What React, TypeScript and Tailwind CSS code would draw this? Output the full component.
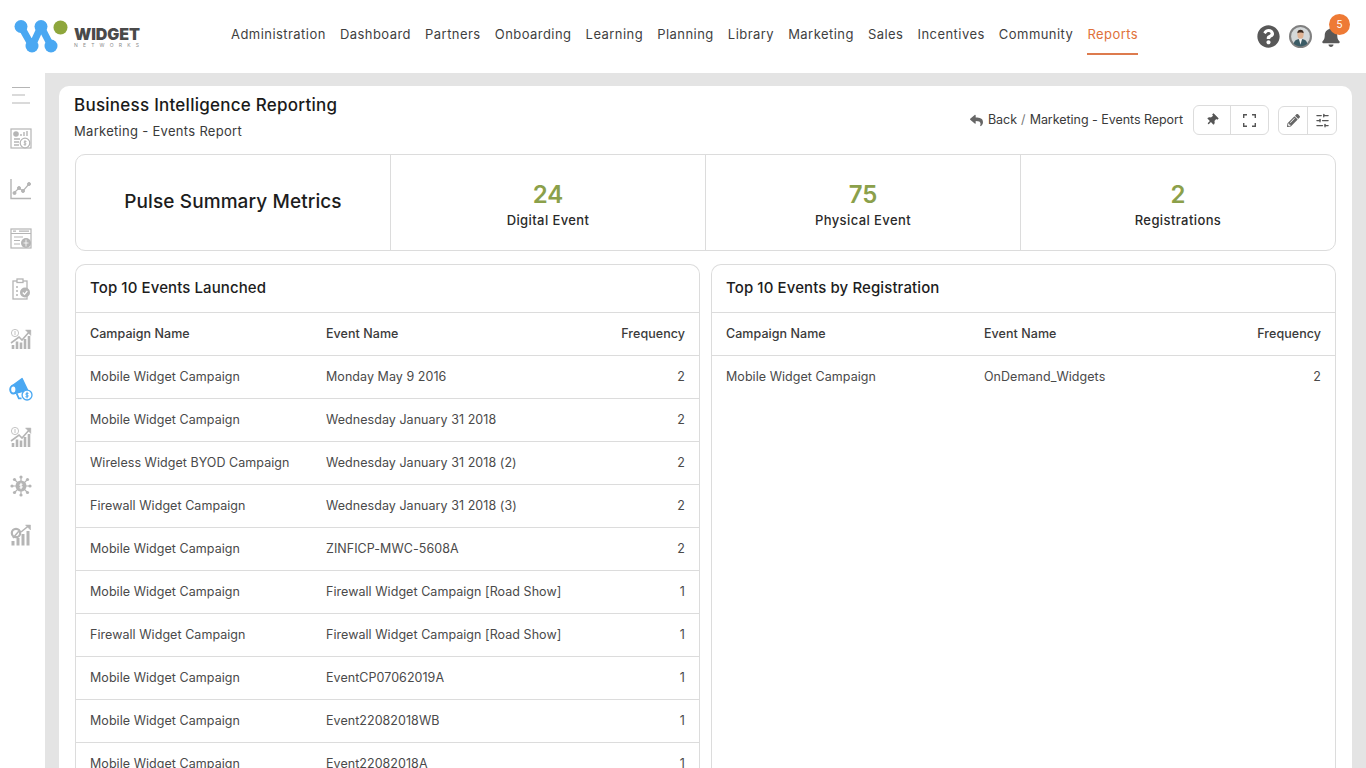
import { FaBell, FaQuestionCircle, FaReply, FaThumbtack, FaPencilAlt } from "react-icons/fa";
import { LuSlidersHorizontal } from "react-icons/lu";

const NAV = ["Administration", "Dashboard", "Partners", "Onboarding", "Learning", "Planning", "Library", "Marketing", "Sales", "Incentives", "Community"];

const METRICS = [
  { value: "24", label: "Digital Event" },
  { value: "75", label: "Physical Event" },
  { value: "2", label: "Registrations" },
];

const LAUNCHED = [
  ["Mobile Widget Campaign", "Monday May 9 2016", "2"],
  ["Mobile Widget Campaign", "Wednesday January 31 2018", "2"],
  ["Wireless Widget BYOD Campaign", "Wednesday January 31 2018 (2)", "2"],
  ["Firewall Widget Campaign", "Wednesday January 31 2018 (3)", "2"],
  ["Mobile Widget Campaign", "ZINFICP-MWC-5608A", "2"],
  ["Mobile Widget Campaign", "Firewall Widget Campaign [Road Show]", "1"],
  ["Firewall Widget Campaign", "Firewall Widget Campaign [Road Show]", "1"],
  ["Mobile Widget Campaign", "EventCP07062019A", "1"],
  ["Mobile Widget Campaign", "Event22082018WB", "1"],
  ["Mobile Widget Campaign", "Event22082018A", "1"],
];

const REGISTRATION = [["Mobile Widget Campaign", "OnDemand_Widgets", "2"]];

function Logo() {
  return (
    <div className="flex items-center">
      <svg width="56" height="36" viewBox="0 0 56 36" className="shrink-0">
        <path d="M7 7.5 L18 27 L27 7.5 L37 27" fill="none" stroke="#4aa8f2" strokeWidth="7" strokeLinecap="round" strokeLinejoin="round" />
        <circle cx="7" cy="7.5" r="6.5" fill="#4aa8f2" />
        <circle cx="18" cy="27" r="6.5" fill="#4aa8f2" />
        <circle cx="27" cy="7.5" r="6.5" fill="#4aa8f2" />
        <circle cx="37" cy="27" r="6.5" fill="#4aa8f2" />
        <circle cx="46.5" cy="8.5" r="7" fill="#8ea63c" />
      </svg>
      <div className="ml-[4px] mt-[1px] flex flex-col">
        <span className="text-[16px] leading-[16px] font-black tracking-[-0.1px] text-[#4a4a4a]">WIDGET</span>
        <span className="text-[5px] leading-[7px] tracking-[5.2px] text-[#8a8a8a]">NETWORKS</span>
      </div>
    </div>
  );
}

function MenuIcon() {
  return (
    <svg width="20" height="20" viewBox="0 0 20 20" stroke="#b5b5b5" strokeWidth="1">
      <path d="M1 2.5H19M1 10H14M1 18H19" />
    </svg>
  );
}

function ReportIcon() {
  return (
    <svg width="22" height="22" viewBox="0 0 22 22" fill="none" stroke="#b5b5b5" strokeWidth="1.2">
      <rect x="1" y="1" width="20" height="19" />
      <circle cx="6" cy="6" r="2.2" fill="#b5b5b5" />
      <path d="M11 8V6M14 8V4M17 8V3M4 11H10M4 14H9M4 17H9" strokeWidth="1.4" />
      <circle cx="15" cy="15" r="4.8" fill="#fff" />
      <path d="M15 12V18M16.5 13.5H14.3V15H15.8V16.6H13.6" strokeWidth="0.9" />
    </svg>
  );
}

function LineChartIcon() {
  return (
    <svg width="22" height="22" viewBox="0 0 22 22" fill="none" stroke="#b5b5b5">
      <path d="M1 1V20.5H21" strokeWidth="1.4" />
      <path d="M4 15L9 10L13 13L19 6" strokeWidth="1.2" />
      <circle cx="4.5" cy="15" r="1.5" fill="#b5b5b5" />
      <circle cx="9" cy="10" r="1.5" fill="#b5b5b5" />
      <circle cx="13" cy="13" r="1.5" fill="#b5b5b5" />
      <circle cx="19" cy="6" r="1.5" fill="#b5b5b5" />
    </svg>
  );
}

function BrowserIcon() {
  return (
    <svg width="22" height="22" viewBox="0 0 22 22" fill="none" stroke="#b5b5b5" strokeWidth="1.2">
      <rect x="1" y="1" width="20" height="19" />
      <path d="M1 5.5H21M3 3.2H6M9 3.2H19M4 9H13M4 12.5H10M4 16H10" />
      <circle cx="16" cy="15" r="5" fill="#b5b5b5" stroke="none" />
      <path d="M16 11.5V18.5M13.5 15H18.5" stroke="#fff" strokeWidth="0.8" />
    </svg>
  );
}

function ClipboardIcon() {
  return (
    <svg width="22" height="22" viewBox="0 0 22 22" fill="none" stroke="#b5b5b5" strokeWidth="1.3">
      <rect x="3" y="3" width="14" height="18" />
      <rect x="7" y="1" width="6" height="3.5" fill="#fff" />
      <path d="M6 9H8M6 13H8M6 17H8" />
      <circle cx="15" cy="14.5" r="5" fill="#b5b5b5" stroke="none" />
      <path d="M12.8 14.5L14.5 16.3L17.3 13" stroke="#fff" strokeWidth="1.2" />
    </svg>
  );
}

function GrowthIcon() {
  return (
    <svg width="22" height="22" viewBox="0 0 22 22" fill="none" stroke="#b5b5b5">
      <circle cx="5" cy="5" r="3.6" strokeWidth="0.8" />
      <path d="M5 3V7" strokeWidth="0.8" />
      <path d="M1 15L9 9L12 12L20 3" strokeWidth="1.6" />
      <path d="M15.5 2H20.8V7.5Z" fill="#b5b5b5" strokeWidth="0.5" />
      <path d="M3 21V17M7 21V13.5M11 21V14.5M15 21V11M19 21V8" strokeWidth="2.6" />
    </svg>
  );
}

function MegaphoneIcon() {
  return (
    <svg width="22" height="22" viewBox="0 0 22 22" fill="none" stroke="#4aa8f2" className="scale-110">
      <path d="M3 8L12 1.5L17 12L6 15Z" fill="#4aa8f2" strokeWidth="1.2" strokeLinejoin="round" />
      <ellipse cx="4" cy="11.5" rx="2.8" ry="3.6" fill="#fff" strokeWidth="1.8" />
      <path d="M7 15L9 19.5H11.5" strokeWidth="1.6" />
      <circle cx="16.5" cy="16.5" r="4.5" fill="#fff" strokeWidth="1.2" />
      <path d="M16.5 13.5V19.5M17.8 15H15.6V16.5H17.3V18.1H15" strokeWidth="0.9" />
    </svg>
  );
}

function VirusIcon() {
  return (
    <svg width="22" height="22" viewBox="0 0 22 22" fill="none" stroke="#b5b5b5">
      <path d="M11 1V21M1 11H21M4 4L18 18M18 4L4 18" strokeWidth="1.2" />
      <circle cx="11" cy="11" r="5.5" fill="#b5b5b5" stroke="none" />
      <path d="M11 7.8V14.2M12.5 9.3H10V11H12V12.8H9.5" stroke="#fff" strokeWidth="0.9" />
      <g fill="#b5b5b5" stroke="none">
        <circle cx="11" cy="2" r="1.6" />
        <circle cx="11" cy="20" r="1.6" />
        <circle cx="2" cy="11" r="1.6" />
        <circle cx="20" cy="11" r="1.6" />
        <circle cx="4.5" cy="4.5" r="1.6" />
        <circle cx="17.5" cy="4.5" r="1.6" />
        <circle cx="4.5" cy="17.5" r="1.6" />
        <circle cx="17.5" cy="17.5" r="1.6" />
      </g>
    </svg>
  );
}

function GaugeChartIcon() {
  return (
    <svg width="22" height="22" viewBox="0 0 22 22" fill="none" stroke="#b5b5b5">
      <circle cx="6" cy="9" r="4.2" strokeWidth="2.2" />
      <path d="M3 14L9 7" strokeWidth="1.6" />
      <path d="M3 21.5V17M8 21.5V14M13 21.5V10M18 21.5V7" strokeWidth="3" />
      <path d="M11 8L19 1.5" strokeWidth="1.6" />
      <path d="M15.5 1H20.5V6Z" fill="#b5b5b5" strokeWidth="0.5" />
    </svg>
  );
}

function Sidebar() {
  return (
    <aside className="flex w-[45px] shrink-0 flex-col items-center bg-white pr-[3px] pt-[12px]">
      <div className="flex h-[20px] items-center"><MenuIcon /></div>
      <div className="mt-[23px] flex flex-col items-center gap-[28px]">
        <ReportIcon />
        <LineChartIcon />
        <BrowserIcon />
        <ClipboardIcon />
        <GrowthIcon />
        <MegaphoneIcon />
        <div className="-mt-[2px]"><GrowthIcon /></div>
        <div className="-mt-[1px]"><VirusIcon /></div>
        <div className="-mt-[1px]"><GaugeChartIcon /></div>
      </div>
    </aside>
  );
}

function Avatar() {
  return (
    <svg width="23" height="23" viewBox="0 0 22 22">
      <circle cx="11" cy="11" r="10" fill="#d4d8d9" stroke="#808080" strokeWidth="2" />
      <path d="M4.5 18C5 14.5 8 13.5 11 13.5S17 14.5 17.5 18C15.5 20 13 20.5 11 20.5S6.5 20 4.5 18Z" fill="#3b5c66" />
      <path d="M9.5 13.5H12.5L11 19Z" fill="#f4f4f4" />
      <ellipse cx="11" cy="9" rx="3" ry="4" fill="#e0b394" />
      <path d="M8 8C7.8 5.5 9.5 4.5 11 4.5S14.2 5.5 14 8C13 6.8 9 6.8 8 8Z" fill="#3d2c22" />
    </svg>
  );
}

function Header() {
  return (
    <header className="flex h-[73px] shrink-0 items-center bg-white">
      <div className="ml-[14px] w-[217px] shrink-0"><Logo /></div>
      <nav className="flex h-full items-center gap-[14.1px] pb-[4px] text-[13px] tracking-[0.45px] text-[#3f3f3f]">
        {NAV.map((item) => (
          <a key={item} className="flex h-full items-center whitespace-nowrap">{item}</a>
        ))}
        <a className="relative flex h-full items-center whitespace-nowrap text-[#e0713a]">
          Reports
          <span className="absolute bottom-[14.5px] left-0 right-0 h-[1.5px] bg-[#dd7b4e]" />
        </a>
      </nav>
      <div className="ml-auto mr-[25px] flex items-center gap-[9px]">
        <FaQuestionCircle className="h-[23px] w-[23px] text-[#585858]" />
        <Avatar />
        <div className="relative">
          <FaBell className="h-[20px] w-[20px] text-[#585858]" />
          <span className="absolute left-[8px] top-[-13px] flex h-[21px] w-[21px] items-center justify-center rounded-full bg-[#ee7a35] text-[10px] text-white">5</span>
        </div>
      </div>
    </header>
  );
}

function Metrics() {
  return (
    <section className="mt-[14px] grid h-[97px] grid-cols-[314px_315px_315px_1fr] rounded-[10px] border border-[#dcdcdc]">
      <div className="flex items-center justify-center text-[19px] tracking-[0.1px] font-medium text-[#1d1d1d]">Pulse Summary Metrics</div>
      {METRICS.map((m) => (
        <div key={m.label} className="flex flex-col items-center justify-center border-l border-[#dcdcdc] pt-[4px]">
          <span className="text-[24px] leading-[28px] font-semibold text-[#8ba04a]">{m.value}</span>
          <span className="mt-[2px] text-[13px] leading-[18px] tracking-[0.4px] font-medium text-[#2a2a2a]">{m.label}</span>
        </div>
      ))}
    </section>
  );
}

function EventsTable({ title, rows, nameCol }: { title: string; rows: string[][]; nameCol: string }) {
  return (
    <div className="min-w-0 flex-1 rounded-t-[10px] border border-b-0 border-[#dcdcdc] pb-[40px]">
      <h2 className="flex h-[47px] items-center px-[14px] text-[15px] tracking-[0.1px] font-medium text-[#1d1d1d]">{title}</h2>
      <div className={`grid h-[43px] items-center border-t border-[#dcdcdc] px-[14px] text-[12.5px] tracking-[0.05px] font-medium text-[#3a3a3a] ${nameCol}`}>
        <span>Campaign Name</span>
        <span>Event Name</span>
        <span className="text-right">Frequency</span>
      </div>
      {rows.map((row, i) => (
        <div key={i} className={`grid h-[43px] items-center border-t border-[#dcdcdc] px-[14px] text-[12.5px] tracking-[0.05px] text-[#4a4a4a] ${nameCol}`}>
          <span className="whitespace-nowrap">{row[0]}</span>
          <span className="whitespace-nowrap">{row[1]}</span>
          <span className="text-right">{row[2]}</span>
        </div>
      ))}
    </div>
  );
}

export default function App() {
  return (
    <div className="flex h-screen flex-col overflow-hidden bg-[#e4e4e4] font-['Inter',sans-serif]">
      <Header />
      <div className="flex min-h-0 flex-1">
        <Sidebar />
        <main className="min-w-0 flex-1 pl-[14px] pr-[14px] pt-[13px]">
          <div className="h-[900px] rounded-t-[10px] bg-white px-[16px] pt-[7px]">
            <div className="flex h-[47px] items-start justify-between">
              <div className="ml-[-1px]">
                <h1 className="text-[17px] leading-[24px] tracking-[0.25px] font-medium text-[#1a1a1a]">Business Intelligence Reporting</h1>
                <p className="mt-[5px] text-[13px] leading-[18px] tracking-[0.3px] text-[#3a3a3a]">Marketing - Events Report</p>
              </div>
              <div className="mr-[-1px] mt-[12px] flex items-center">
                <FaReply className="h-[13px] w-[13px] text-[#666]" />
                <span className="ml-[5px] text-[12.5px] text-[#3a3a3a]">Back</span>
                <span className="mx-[4px] text-[12.5px] text-[#777]">/</span>
                <span className="text-[12.5px] tracking-[-0.04px] text-[#3a3a3a]">Marketing - Events Report</span>
                <div className="ml-[10px] flex h-[30px] w-[76px] rounded-[6px] border border-[#dcdcdc]">
                  <button className="flex w-[37px] items-center justify-center border-r border-[#dcdcdc]">
                    <FaThumbtack className="h-[12px] w-[12px] rotate-45 text-[#555]" />
                  </button>
                  <button className="flex flex-1 items-center justify-center">
                    <svg width="13" height="13" viewBox="0 0 13 13" fill="none" stroke="#555" strokeWidth="1.4">
                      <path d="M.7 4V.7H4M9 .7H12.3V4M12.3 9V12.3H9M4 12.3H.7V9" />
                    </svg>
                  </button>
                </div>
                <div className="ml-[9px] flex h-[29px] w-[59px] rounded-[6px] border border-[#dcdcdc]">
                  <button className="flex w-[29px] items-center justify-center border-r border-[#dcdcdc]">
                    <FaPencilAlt className="h-[13px] w-[13px] text-[#666]" />
                  </button>
                  <button className="flex flex-1 items-center justify-center">
                    <LuSlidersHorizontal className="h-[15px] w-[15px] text-[#555]" />
                  </button>
                </div>
              </div>
            </div>
            <Metrics />
            <div className="mt-[13px] flex gap-[11px]">
              <EventsTable title="Top 10 Events Launched" rows={LAUNCHED} nameCol="grid-cols-[236px_1fr_70px]" />
              <EventsTable title="Top 10 Events by Registration" rows={REGISTRATION} nameCol="grid-cols-[258px_1fr_70px]" />
            </div>
          </div>
        </main>
      </div>
    </div>
  );
}
